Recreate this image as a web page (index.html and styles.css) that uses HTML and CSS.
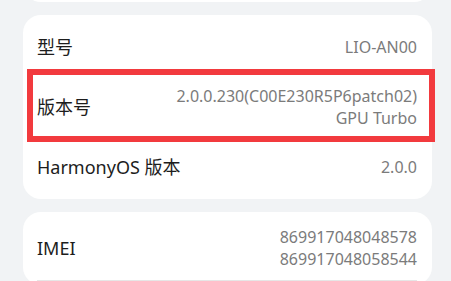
FILE: index.html
```html
<!DOCTYPE html>
<html lang="zh">
<head>
<meta charset="utf-8">
<link rel="stylesheet" href="styles.css">
</head>
<body>
<div class="page">
  <div class="card card-prev"></div>
  <div class="card">
    <div class="row">
      <div class="label">型号</div>
      <div class="value">LIO-AN00</div>
    </div>
    <div class="row row-marked">
      <div class="label">版本号</div>
      <div class="value">2.0.0.230(C00E230R5P6patch02)<br>GPU Turbo</div>
      <div class="mark"></div>
    </div>
    <div class="row">
      <div class="label">HarmonyOS 版本</div>
      <div class="value">2.0.0</div>
    </div>
  </div>
  <div class="card">
    <div class="row row-divided">
      <div class="label">IMEI</div>
      <div class="value">869917048048578<br>869917048058544</div>
    </div>
  </div>
</div>
</body>
</html>
```
FILE: styles.css
```css
html, body {
  margin: 0;
  padding: 0;
  background: #f1f3f5;
  overflow: hidden;
}
body {
  font-family: "Noto Sans", "Noto Sans CJK SC", sans-serif;
}
.page {
  display: flex;
  flex-direction: column;
  gap: 13px;
  padding: 0 19px 0 23px;
}
.card {
  background: #ffffff;
  border-radius: 18px;
  padding: 4px 15px 4px 14px;
}
.card-prev {
  height: 32px;
  margin-top: -38px;
}
.row {
  position: relative;
  display: flex;
  align-items: center;
  justify-content: space-between;
  min-height: 56px;
  box-sizing: border-box;
  padding: 10px 0;
}
.row-divided {
  border-bottom: 1px solid #e6e6e6;
}
.label {
  font-size: 18px;
  color: #1d1d1d;
  line-height: 24px;
}
.value {
  font-size: 16px;
  line-height: 22px;
  color: #7b7b7b;
  text-align: right;
}
.mark {
  position: absolute;
  left: -10px;
  right: -18px;
  top: -6px;
  bottom: -3px;
  border: 6px solid #f23a3e;
  box-sizing: border-box;
}
```
